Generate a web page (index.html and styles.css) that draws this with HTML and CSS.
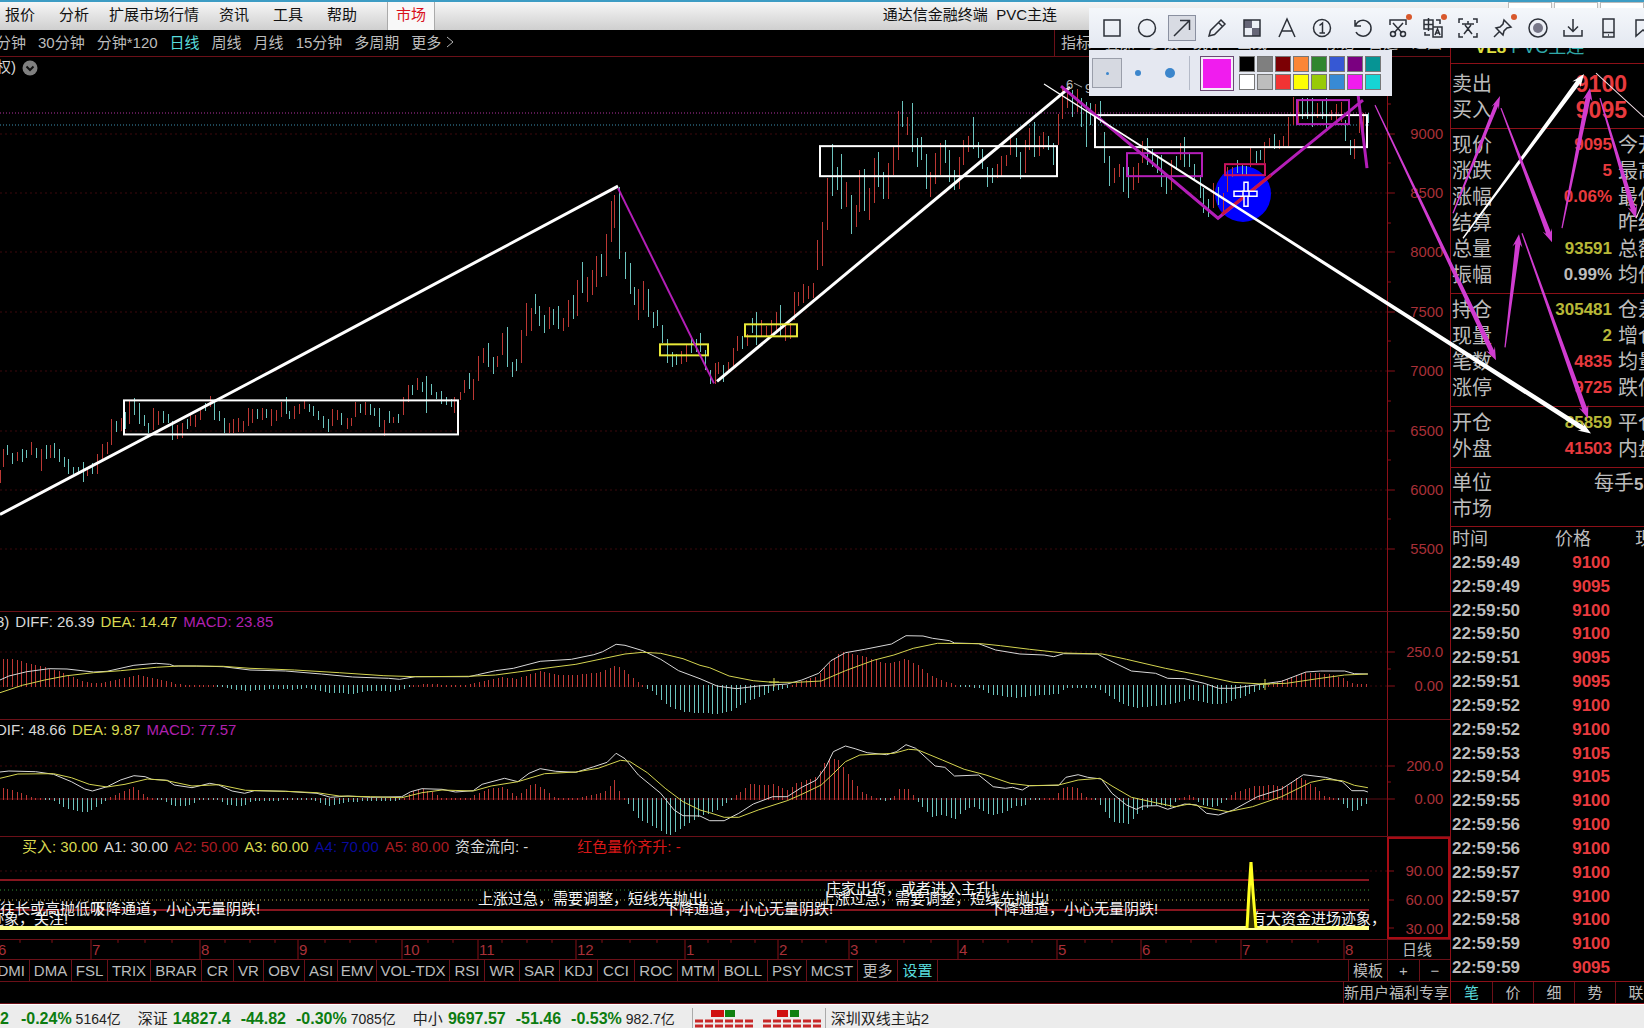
FILE: index.html
```html
<!DOCTYPE html>
<html lang="zh-CN">
<head>
<meta charset="utf-8">
<title>通达信金融终端 PVC主连</title>
<link rel="stylesheet" href="styles.css">
</head>
<body>
<div class="app">
  <header class="menubar">
    <nav class="menu">
      <a href="#">报价</a><a href="#">分析</a><a href="#">扩展市场行情</a><a href="#">资讯</a><a href="#">工具</a><a href="#">帮助</a>
      <a href="#" class="market">市场</a>
    </nav>
    <h1 class="app-title">通达信金融终端&nbsp; PVC主连</h1>
    <div class="win-buttons"><i></i><i></i><i></i></div>
  </header>

  <div class="work">
    <main class="charts">
      <nav class="periods">
        <a href="#">分钟</a><a href="#">30分钟</a><a href="#">分钟*120</a><a href="#" class="on">日线</a><a href="#">周线</a><a href="#">月线</a><a href="#">15分钟</a><a href="#">多周期</a><a href="#">更多 <svg width="8" height="12" viewBox="0 0 8 12"><path d="M1 1L7 6L1 11" fill="none" stroke="#b4b4b4"/></svg></a>
        <div class="tools"><a href="#">指标</a><a href="#">叠加</a><a href="#">多股</a><a href="#">统计</a><a href="#">画线</a><a href="#">标记</a><a href="#">自选</a><a href="#">返回</a></div>
      </nav>

      <section class="pane pane-price">
        <div class="legend"><span>权)</span>
          <svg class="chev" viewBox="0 0 16 16"><circle cx="8" cy="8" r="7.5" fill="#808080"/><path d="M4.500 6.500L8 10L11.500 6.500" fill="none" stroke="#111" stroke-width="2"/></svg>
        </div>
        <svg class="plot" viewBox="0 57 1387 554" preserveAspectRatio="none">
          <g class="grid"><path d="M0 134H1387M0 193H1387M0 252H1387M0 312H1387M0 371H1387M0 431H1387M0 490H1387M0 549H1387"/></g>
          <path d="M0 113H1370" class="dots magenta"/>
          <path d="M0 125H1370" class="dots blue"/>
          <circle cx="1243" cy="194" r="28" fill="#00f"/>
          <path id="candles-up" class="up"/><path id="candles-down" class="down"/>
        </svg>
        <svg class="scale" viewBox="1387 57 63 554" preserveAspectRatio="none">
          <path class="tick" d="M1387 134h7M1387 193h7M1387 252h7M1387 312h7M1387 371h7M1387 431h7M1387 490h7M1387 549h7M1387 104h3M1387 163h3M1387 223h3M1387 282h3M1387 341h3M1387 401h3M1387 460h3M1387 519h3"/>
          <text x="1443" y="139">9000</text><text x="1443" y="198">8500</text><text x="1443" y="257">8000</text><text x="1443" y="317">7500</text><text x="1443" y="376">7000</text><text x="1443" y="436">6500</text><text x="1443" y="495">6000</text><text x="1443" y="554">5500</text>
        </svg>
      </section>

      <section class="pane pane-macd">
        <div class="legend"><span>3)</span><span>DIFF: 26.39</span><span class="y">DEA: 14.47</span><span class="m">MACD: 23.85</span></div>
        <svg class="plot" viewBox="0 612 1387 107" preserveAspectRatio="none">
          <g class="grid"><path d="M0 652H1387M0 686H1387"/></g>
          <path id="h1-up" class="up"/><path id="h1-down" class="down"/>
          <path id="diff1" class="line white"/><path id="dea1" class="line yellow"/>
          <path d="M769 682H779M774 678V687M1260 684H1270M1265 679V690" class="line yellow"/>
        </svg>
        <svg class="scale" viewBox="1387 612 63 107" preserveAspectRatio="none">
          <path class="tick" d="M1387 652h7M1387 669h3M1387 686h7"/>
          <text x="1443" y="657">250.0</text><text x="1443" y="691">0.00</text>
        </svg>
      </section>

      <section class="pane pane-dif">
        <div class="legend"><span>DIF: 48.66</span><span class="y">DEA: 9.87</span><span class="m">MACD: 77.57</span></div>
        <svg class="plot" viewBox="0 720 1387 116" preserveAspectRatio="none">
          <g class="grid"><path d="M0 766H1387"/></g>
          <path d="M0 799H1387" stroke="#5a0c14"/>
          <path id="h2-up" class="up"/><path id="h2-down" class="down"/>
          <path id="diff2" class="line white"/><path id="dea2" class="line yellow"/>
        </svg>
        <svg class="scale" viewBox="1387 720 63 116" preserveAspectRatio="none">
          <path class="tick" d="M1387 766h7M1387 782h3M1387 799h7"/>
          <text x="1443" y="771">200.0</text><text x="1443" y="804">0.00</text>
        </svg>
      </section>

      <section class="pane pane-flow">
        <div class="legend"><span class="y">买入: 30.00</span><span>A1: 30.00</span><span class="r">A2: 50.00</span><span class="y">A3: 60.00</span><span class="b">A4: 70.00</span><span class="r">A5: 80.00</span><span>资金流向: -</span><span class="r bright">红色量价齐升: -</span></div>
        <svg class="plot" viewBox="0 837 1387 102" preserveAspectRatio="none">
          <g class="grid"><path d="M0 871H1387"/></g>
          <path d="M0 880H1369M0 910H1369" stroke="#86161f" stroke-width="2"/>
          <path d="M0 890H1369" class="dots green"/><path d="M0 900H1369" class="dots gold"/>
          <g class="notes">
            <text x="0" y="914">往长或高抛低吸</text><text x="91" y="914">下降通道，小心无量阴跌!</text>
            <text x="-11" y="924">迹象，关注!</text>
            <text x="478" y="904">上涨过急，需要调整，短线先抛出!</text><text x="664" y="914">下降通道，小心无量阴跌!</text>
            <text x="826" y="894">庄家出货，或者进入主升!</text><text x="820" y="904">上涨过急，需要调整，短线先抛出!</text><text x="989" y="914">下降通道，小心无量阴跌!</text>
            <text x="1251" y="924">有大资金进场迹象，</text>
          </g>
          <path d="M0 928H1369" stroke="#ffff8c" stroke-width="4"/>
          <path d="M1247 928L1249 892L1251 862L1253 892L1256 928" fill="#330" stroke="#ffff20" stroke-width="3"/>
        </svg>
        <svg class="scale selected" viewBox="1387 837 63 102" preserveAspectRatio="none">
          <path class="tick" d="M1387 871h7M1387 900h7M1387 928h7"/>
          <text x="1443" y="876">90.00</text><text x="1443" y="905">60.00</text><text x="1443" y="934">30.00</text>
        </svg>
      </section>

      <div class="time-axis">
        <svg class="plot" viewBox="0 939 1387 20" preserveAspectRatio="none">
          <path class="tick" d="M91 939v20M200 939v20M298 939v20M402 939v20M478 939v20M576 939v20M685 939v20M778 939v20M849 939v20M958 939v20M1057 939v20M1141 939v20M1241 939v20M1344 939v20M20 939v3M52 939v3M118 939v3M145 939v3M172 939v3M225 939v3M250 939v3M275 939v3M325 939v3M350 939v3M376 939v3M428 939v3M453 939v3M502 939v3M527 939v3M552 939v3M602 939v3M630 939v3M657 939v3M708 939v3M731 939v3M755 939v3M802 939v3M826 939v3M876 939v3M904 939v3M931 939v3M983 939v3M1008 939v3M1032 939v3M1085 939v3M1112 939v3M1166 939v3M1191 939v3M1216 939v3M1267 939v3M1292 939v3M1318 939v3"/>
          <text x="-2" y="955">6</text><text x="92" y="955">7</text><text x="201" y="955">8</text><text x="299" y="955">9</text><text x="403" y="955">10</text><text x="479" y="955">11</text><text x="577" y="955">12</text><text x="686" y="955">1</text><text x="779" y="955">2</text><text x="850" y="955">3</text><text x="959" y="955">4</text><text x="1058" y="955">5</text><text x="1142" y="955">6</text><text x="1242" y="955">7</text><text x="1345" y="955">8</text>
        </svg>
        <span>日线</span>
      </div>

      <nav class="indicators">
        <div class="ind-tabs"><a href="#">DMI</a><a href="#">DMA</a><a href="#">FSL</a><a href="#">TRIX</a><a href="#">BRAR</a><a href="#">CR</a><a href="#">VR</a><a href="#">OBV</a><a href="#">ASI</a><a href="#">EMV</a><a href="#">VOL-TDX</a><a href="#">RSI</a><a href="#">WR</a><a href="#">SAR</a><a href="#">KDJ</a><a href="#">CCI</a><a href="#">ROC</a><a href="#">MTM</a><a href="#">BOLL</a><a href="#">PSY</a><a href="#">MCST</a><a href="#">更多</a><a href="#" class="on">设置</a></div>
        <div class="ind-side"><a href="#">模板</a><button>+</button><button>−</button></div>
      </nav>
      <div class="promo"><a href="#">新用户福利专享</a></div>
    </main>

    <aside class="quote">
      <h2><b>VL8</b> PVC主连</h2>
      <table class="block first">
        <tr><th>卖出</th><td class="r big">9100</td></tr>
        <tr><th>买入</th><td class="r big">9095</td></tr>
      </table>
      <table class="block">
        <tr><th>现价</th><td class="r">9095</td><th>今开</th></tr>
        <tr><th>涨跌</th><td class="r">5</td><th>最高</th></tr>
        <tr><th>涨幅</th><td class="r">0.06%</td><th>最低</th></tr>
        <tr><th>结算</th><td></td><th>昨结</th></tr>
        <tr><th>总量</th><td class="y">93591</td><th>总额</th></tr>
        <tr><th>振幅</th><td>0.99%</td><th>均价</th></tr>
      </table>
      <table class="block">
        <tr><th>持仓</th><td class="y">305481</td><th>仓差</th></tr>
        <tr><th>现量</th><td class="y">2</td><th>增仓</th></tr>
        <tr><th>笔数</th><td class="r">4835</td><th>均量</th></tr>
        <tr><th>涨停</th><td class="r">9725</td><th>跌停</th></tr>
      </table>
      <table class="block">
        <tr><th>开仓</th><td class="y">85859</td><th>平仓</th></tr>
        <tr><th>外盘</th><td class="r">41503</td><th>内盘</th></tr>
      </table>
      <table class="block unit">
        <tr><th>单位</th><td><span>每手</span>5吨</td></tr>
        <tr><th>市场</th><td></td></tr>
      </table>
      <table class="ticks">
        <thead><tr><th>时间</th><th class="p">价格</th><th class="v">现量</th></tr></thead>
        <tbody>
          <tr><td>22:59:49</td><td class="r">9100</td></tr>
          <tr><td>22:59:49</td><td class="r">9095</td></tr>
          <tr><td>22:59:50</td><td class="r">9100</td></tr>
          <tr><td>22:59:50</td><td class="r">9100</td></tr>
          <tr><td>22:59:51</td><td class="r">9095</td></tr>
          <tr><td>22:59:51</td><td class="r">9095</td></tr>
          <tr><td>22:59:52</td><td class="r">9100</td></tr>
          <tr><td>22:59:52</td><td class="r">9100</td></tr>
          <tr><td>22:59:53</td><td class="r">9105</td></tr>
          <tr><td>22:59:54</td><td class="r">9105</td></tr>
          <tr><td>22:59:55</td><td class="r">9100</td></tr>
          <tr><td>22:59:56</td><td class="r">9100</td></tr>
          <tr><td>22:59:56</td><td class="r">9100</td></tr>
          <tr><td>22:59:57</td><td class="r">9100</td></tr>
          <tr><td>22:59:57</td><td class="r">9100</td></tr>
          <tr><td>22:59:58</td><td class="r">9100</td></tr>
          <tr><td>22:59:59</td><td class="r">9100</td></tr>
          <tr><td>22:59:59</td><td class="r">9095</td></tr>
        </tbody>
      </table>
      <nav class="quote-tabs"><a href="#" class="on">笔</a><a href="#">价</a><a href="#">细</a><a href="#">势</a><a href="#">联</a></nav>
    </aside>
  </div>

  <footer class="status">
    <div class="index"><b>2</b><b>-0.24%</b><span>5164亿</span></div>
    <div class="index"><strong>深证</strong><b>14827.4</b><b>-44.82</b><b>-0.30%</b><span>7085亿</span></div>
    <div class="index"><strong>中小</strong><b>9697.57</b><b>-51.46</b><b>-0.53%</b><span>982.7亿</span></div>
    <div class="lamps">
      <svg width="60" height="19" viewBox="0 0 60 19"><path d="M16 1h13v7h-13z" fill="#d01010"/><path d="M30 1h10v7h-10z" fill="#108010"/><path d="M0 12H60M0 17H60" stroke="#c82828" stroke-width="3" stroke-dasharray="8 2"/></svg>
      <svg width="60" height="19" viewBox="0 0 60 19"><path d="M14 1h11v7h-11z" fill="#d01010"/><path d="M27 1h9v7h-9z" fill="#108010"/><path d="M0 12H60M0 17H60" stroke="#c82828" stroke-width="3" stroke-dasharray="8 2"/></svg>
    </div>
    <div class="host">深圳双线主站2</div>
  </footer>

  <svg class="ink" viewBox="0 0 1644 1028" preserveAspectRatio="none">
    <g fill="none" stroke="#fff" stroke-width="2">
      <rect x="124" y="400" width="334" height="34"/>
      <rect x="820" y="146" width="237" height="30"/>
      <rect x="1095" y="115" width="272" height="32"/>
      <path d="M0 514L273 370L618 186" stroke-width="3"/>
      <path d="M717 381L1070 87" stroke-width="3"/>
    </g>
    <g fill="none" stroke="#e8e838" stroke-width="2">
      <rect x="660" y="344" width="48" height="11"/><rect x="745" y="324" width="52" height="12"/>
    </g>
    <g fill="none" stroke="#b41eb8" stroke-width="3">
      <path d="M618 188L714 383" stroke-width="2"/>
      <path d="M1061 86L1218 218L1363 100M1358 94L1363 135L1367 168"/>
      <rect x="1127" y="153" width="75" height="23" stroke-width="2"/>
      <rect x="1297" y="100" width="52" height="24" stroke-width="2"/>
      <rect x="1225" y="164" width="40" height="11" stroke="#c8125e" stroke-width="2"/>
      <path d="M1222 214L1271 175" stroke="#c81440"/>
    </g>
    <g class="peak"><text x="1066" y="89">6</text><text x="1085" y="93">9</text><path d="M1074 83L1082 87" stroke="#aaa"/></g>
    <g id="arrows"></g>
    <path d="M1596 73L1644 117M1636 218L1644 200" stroke="#f4dfe8" fill="none"/>
    <g fill="#00f" stroke="#fff" stroke-width="1.500">
      <path d="M1244 182h4v9h9v5h-9v10h-4v-10h-10v-5h10z"/><rect x="1243" y="191" width="6" height="5"/>
    </g>
  </svg>

  <div class="shot-bar" role="toolbar">
    <button><svg viewBox="0 0 22 22"><path d="M3 3H19V19H3Z"/></svg></button>
    <button><svg viewBox="0 0 22 22"><circle cx="11" cy="11" r="8.5"/></svg></button>
    <button class="active"><svg viewBox="0 0 22 22"><path d="M3 19L18 4M9 3.500H18.500V13"/></svg></button>
    <button><svg viewBox="0 0 22 22"><path d="M3 19L4.500 13.500L15 3L19 7L8.500 17.500ZM12.500 5.500L16.500 9.500"/></svg></button>
    <button><svg viewBox="0 0 22 22"><path d="M3 3H11V11H3ZM11 11H19V19H11Z" fill="#667" stroke="none"/><path d="M3 3H19V19H3Z"/></svg></button>
    <button><svg viewBox="0 0 22 22"><path d="M3 20L11 2L19 20M6 14H16"/></svg></button>
    <button><svg viewBox="0 0 22 22"><circle cx="11" cy="11" r="8.500"/><path d="M8.500 8.500L11.500 6V16M8.500 16H14"/></svg></button>
    <i class="rule"></i>
    <button><svg viewBox="0 0 22 22"><path d="M3 3V9H9M3.500 8.500A8 8 0 1 1 4 15"/></svg></button>
    <button class="dot"><svg viewBox="0 0 22 22"><path d="M3 8V3H19V8M6 6L15 16M16 6L7 16"/><circle cx="6" cy="17" r="2.500"/><circle cx="16" cy="17" r="2.500"/></svg></button>
    <button class="dot"><svg viewBox="0 0 22 22"><path d="M2 3H11V12H2ZM6.500 1V14M2 7.500H11M11 10H20V20H11ZM13 18L15.500 12L18 18M14 16H17M3 15V18H8M14 3H18V7"/></svg></button>
    <button><svg viewBox="0 0 22 22"><path d="M2 6V2H6M16 2H20V6M20 16V20H16M6 20H2V16M5 7H17M11 4V7M8 8L15 17M14 8L7 17"/></svg></button>
    <button class="dot"><svg viewBox="0 0 22 22"><path d="M12 3L19 10L15 11L12 14L11 18L4 11L8 10L11 7ZM7.500 14.500L2 20"/></svg></button>
    <button><svg viewBox="0 0 22 22"><circle cx="11" cy="11" r="9"/><circle cx="11" cy="11" r="5" fill="#778" stroke="none"/></svg></button>
    <button><svg viewBox="0 0 22 22"><path d="M11 2V14M6 9.500L11 14.500L16 9.500M2 13V19H20V13"/></svg></button>
    <button><svg viewBox="0 0 22 22"><path d="M6 2H17V20H6ZM6 15.500H17M11 18H12"/></svg></button>
    <button><svg viewBox="0 0 22 22"><path d="M4 3H18V19L11 13L4 19Z"/></svg></button>
  </div>

  <div class="color-bar" role="toolbar">
    <button class="size active"><i class="s1"></i></button>
    <button class="size"><i class="s2"></i></button>
    <button class="size"><i class="s3"></i></button>
    <i class="rule"></i>
    <button class="current"></button>
    <div class="palette">
      <button style="background:#000"></button><button style="background:#7f7f7f"></button><button style="background:#7c0004"></button><button style="background:#fb8636"></button><button style="background:#30862f"></button><button style="background:#3658d4"></button><button style="background:#7a0080"></button><button style="background:#069494"></button>
      <button style="background:#fff"></button><button style="background:#bdbdbd"></button><button style="background:#f23434"></button><button style="background:#fdfd04"></button><button style="background:#98ca08"></button><button style="background:#388ad4"></button><button style="background:#f01cee"></button><button style="background:#16d4d4"></button>
    </div>
  </div>
</div>
<script src="chart.js"></script>
</body>
</html>
```
FILE: styles.css
```css
* { box-sizing: border-box; }
body {
  margin: 0;
  background: #000;
  color: #bcbcbc;
  font: 15px/20px "Liberation Sans", "Noto Sans CJK SC", sans-serif;
}
a { color: inherit; text-decoration: none; }
button { padding: 0; border: 0; background: none; color: inherit; font: inherit; }
table { border-collapse: collapse; }
.y { color: #d8d850; }
.m { color: #b020b0; }
.b { color: #0a0a9c; }
.r { color: #a81c22; }
.r.bright { color: #d81818; margin-left: 43px; }
.on { color: #58dcdc; }

.app { position: relative; display: flex; flex-direction: column; min-height: 100vh; overflow: hidden; }

/* title and menu */
.menubar {
  display: flex;
  height: 30px;
  border-top: 2px solid #3d9cc4;
  background: linear-gradient(#f6f6f6, #cfcfcf);
  color: #111;
  line-height: 26px;
}
.menu { display: flex; flex: 1; padding-left: 5px; gap: 24px; white-space: nowrap; }
.menu a:nth-child(3) { margin-right: -4px; }
.menu a:nth-child(2) { margin-right: -4px; }
.menu .market { width: 48px; margin-left: 6px; border: 1px solid #aaa; border-width: 0 1px; background: #f8f8f8; color: #d8101c; text-align: center; }
.app-title { margin: 0; font-size: 15px; line-height: 26px; font-weight: 400; white-space: pre; }
.win-buttons { display: flex; justify-content: flex-end; gap: 2px; width: 587px; overflow: hidden; }
.win-buttons i { width: 44px; height: 20px; border: 1px solid #bbb; background: #fff; }

.work { display: flex; flex: 1; }
.charts { display: flex; flex-direction: column; flex: 1; min-width: 0; }

.periods {
  display: flex;
  gap: 12px;
  height: 27px;
  padding-right: 8px;
  border-bottom: 1px solid #6b1018;
  line-height: 26px;
  white-space: nowrap;
  overflow: hidden;
}
.periods > a:first-child { margin-left: -4px; }
.tools { display: flex; gap: 14px; margin-left: auto; padding-left: 6px; border-left: 1px solid #6b1018; }
.tools a:nth-child(5) { margin-right: 43px; }

/* chart panes */
.pane {
  position: relative;
  display: grid;
  grid-template-columns: minmax(0, 1fr) 63px;
  border-bottom: 1px solid #6b1018;
}
.pane-price { flex: 1; min-height: 300px; }
.pane-macd { height: 108px; }
.pane-dif { height: 117px; }
.pane-flow { height: 102px; border-bottom: 0; }
.pane svg { width: 100%; height: 100%; min-height: 0; }
.pane-price .plot, .pane-price .scale { height: 554px; }
.legend {
  position: absolute;
  top: 0;
  left: -4px;
  display: flex;
  gap: 6px;
  line-height: 20px;
  color: #d8d8d8;
  white-space: nowrap;
}
.pane-flow .legend { left: 22px; }
.legend .chev { width: 16px; height: 16px; margin-top: 3px; }
.plot { display: block; overflow: hidden; }
.scale { display: block; border-left: 1px solid #8c1018; }
.scale text, .time-axis text { fill: #a83038; font-size: 15px; }
.scale text { text-anchor: end; }
.scale.selected { border: 0; outline: 2px solid #a80c14; outline-offset: -2px; }
.tick { stroke: #8c1018; fill: none; }
.grid path { stroke: #3c080c; stroke-dasharray: 2 3; fill: none; }
.dots { stroke-dasharray: 1 2; fill: none; }
.dots.magenta { stroke: #b030a0; }
.dots.blue { stroke: #3c90b0; }
.dots.green { stroke: #309030; stroke-dasharray: 1 3; }
.dots.gold { stroke: #c0b050; stroke-dasharray: 1 3; }
.up { stroke: #bc3834; fill: none; }
.down { stroke: #6cc4be; fill: none; }
.line { fill: none; }
.line.white { stroke: #d8d8d8; }
.line.yellow { stroke: #d4d450; }
.notes text { fill: #f4f4f4; font-size: 15px; }

.time-axis { display: grid; grid-template-columns: minmax(0, 1fr) 63px; height: 20px; border-top: 1px solid #6b1018; }
.time-axis .plot { width: 100%; height: 19px; }
.time-axis span { border-left: 1px solid #6b1018; padding-right: 4px; text-align: center; }

.indicators { display: flex; justify-content: space-between; height: 23px; border: 1px solid #6b1018; border-width: 1px 0; line-height: 21px; }
.ind-tabs {
  display: grid;
  grid-template-columns: 30px 42px 36px 43px 51px 32px 30px 41px 33px 39px 73px 35px 35px 40px 38px 37px 43px 41px 49px 39px 51px 40px 40px;
}
.ind-tabs a { display: flex; justify-content: center; border-right: 1px solid #6b1018; }
.ind-tabs a:first-child { justify-content: flex-end; padding-right: 4px; }
.ind-side { display: grid; grid-template-columns: 39px 32px 31px; text-align: center; }
.ind-side > * { border-left: 1px solid #6b1018; }
.promo { display: flex; justify-content: flex-end; height: 22px; border-bottom: 1px solid #6b1018; line-height: 21px; }
.promo a { width: 107px; border-left: 1px solid #6b1018; white-space: nowrap; }

/* quote panel */
.quote { display: flex; flex-direction: column; width: 194px; border-left: 1px solid #8c1018; overflow: hidden; }
.quote h2 { height: 34px; margin: 0; padding-left: 24px; border-bottom: 1px solid #8c1018; color: #30a8a8; font-size: 18px; line-height: 34px; font-weight: 400; white-space: nowrap; }
.quote h2 b { color: #e0e040; font-size: 17px; }
.block { display: block; padding: 3px 0 5px 1px; border-bottom: 1px solid #8c1018; }
.block.first { padding-top: 7px; }
.block tr { display: flex; height: 26px; line-height: 26px; }
.block th { width: 40px; flex: none; padding: 0; text-align: left; font-weight: 400; font-size: 20px; white-space: nowrap; }
.block td { width: 120px; flex: none; padding: 0; text-align: right; font-size: 17px; font-weight: 700; }
.block td + th { margin-left: 6px; }
.block td.big { width: 135px; font-size: 23px; }
.block td.r, .ticks td.r { color: #e83a3e; }
.block td.y { color: #b8b838; }
.block.unit { padding: 2px 0 4px 1px; }
.unit td { padding-left: 102px; text-align: left; white-space: nowrap; }
.unit span { font-size: 20px; font-weight: 400; }
.ticks { display: flex; flex-direction: column; flex: 1; padding: 0 0 1px 1px; }
.ticks tbody { display: flex; flex-direction: column; flex: 1; }
.ticks tr { display: flex; flex: 1; align-items: center; }
.ticks th { padding: 0; font-size: 18px; line-height: 24px; font-weight: 400; white-space: nowrap; }
.ticks .p { margin-left: 67px; }
.ticks .v { margin-left: 44px; }
.ticks td { width: 79px; padding: 0; font-size: 17px; font-weight: 700; }
.ticks td.r { text-align: right; }
.quote-tabs { display: grid; grid-template-columns: repeat(5, 41px); height: 23px; border: 1px solid #8c1018; border-width: 1px 0; line-height: 21px; text-align: center; }
.quote-tabs a + a { border-left: 1px solid #6b1018; }

/* index strip */
.status { display: flex; height: 25px; padding-top: 3px; border-top: 1px solid #fff; background: #ececec; color: #222; line-height: 22px; white-space: nowrap; }
.index { display: flex; margin-right: 17px; }
.index b { margin-right: 10px; color: #0c7c10; font-size: 16px; }
.index b:last-of-type { margin-right: 4px; }
.index b:first-child { margin-right: 12px; }
.index strong { margin-right: 5px; font-weight: 400; }
.index span { font-size: 14px; }
.lamps { display: flex; gap: 8px; padding: 1px 2px; border: 1px solid #aaa; border-width: 0 1px; }
.host { padding-left: 5px; }

/* on-screen drawing layer */
.ink { position: absolute; inset: 0; width: 100%; height: 100%; pointer-events: none; }
.peak text { fill: #bbb; font-size: 13px; }

/* capture toolbars */
.shot-bar {
  position: absolute;
  top: 8px;
  right: 0;
  display: flex;
  align-items: center;
  gap: 7px;
  width: 555px;
  height: 40px;
  padding-left: 9px;
  overflow: hidden;
  background: linear-gradient(#f4f7fb, #e4e8f1);
}
.shot-bar button { position: relative; flex: none; width: 28px; height: 26px; }
.shot-bar svg { display: block; width: 22px; height: 22px; margin: 0 auto; fill: none; stroke: #2c3038; stroke-width: 1.5; }
.shot-bar .active { border: 1px solid #8a90a0; background: #d8dbe3; }
.shot-bar .dot::after { content: ""; position: absolute; top: -1px; right: 0; width: 6px; height: 6px; border-radius: 3px; background: #d8582c; }
.rule { width: 1px; background: #b4bac8; }
.shot-bar .rule { height: 16px; margin-right: -1px; }
.color-bar {
  position: absolute;
  top: 50px;
  right: 252px;
  display: flex;
  align-items: center;
  width: 303px;
  height: 46px;
  padding-left: 3px;
  background: #e5e8f1;
}
.size { display: flex; align-items: center; justify-content: center; width: 32px; height: 30px; }
.size.active { width: 30px; border: 1px solid #9a9eaa; background: #d6d9e1; }
.size i { border-radius: 50%; background: #3c86cc; }
.s1 { width: 3px; height: 3px; }
.s2 { width: 6px; height: 6px; }
.s3 { width: 10px; height: 10px; }
.color-bar .rule { height: 34px; margin-left: 3px; }
.current { width: 34px; height: 35px; margin: 0 5px 0 10px; border: 1px solid #6a4a74; background: #f01cee; box-shadow: inset 0 0 0 2px #f4eef8; }
.palette { display: grid; grid-template-columns: repeat(8, 16px); gap: 2px; }
.palette button { height: 16px; border: 1px solid #777; }
```
FILE: chart.js
```js
// Bars are stored as "<r|c>x high low" in sheet units; each sheet maps to the page with its own origin and scale.
const candleSheets = [
  { ox: 0, oy: 370, sx: 2.8, sy: 3, bars: "r1 300 340,r10 238 290,c20 226 256,c34 248 282,r48 245 272,c62 238 275,c73 240 263,r87 216 256,c101 234 265,r115 238 304,c129 226 266,r140 226 264,c153 219 263,c167 238 275,c181 262 290,c192 266 313,c206 290 312,c219 290 308,c234 275 335,r245 294 318,c258 280 312,r272 253 312,r286 222 268,r300 215 252,r311 148 226,c325 152 186,r339 143 182,c352 125 178,r362 92 162,c376 84 136,c391 98 161,c405 135 168,c416 158 188,r430 114 180,r443 122 166,c457 123 160,c471 133 160,c482 154 209,r496 166 206,r510 160 204,c524 147 178,r534 133 168,r548 136 172,r562 120 150,c576 100 124,r588 78 110,c600 90 150,c614 122 152,c628 143 190,r642 158 190,r654 148 188,r668 145 185,r682 152 185,r695 114 168,r706 118 160,c720 117 147,r734 114 150,c747 117 145,r759 118 168,r773 120 152,r787 96 140,c801 80 131,c811 122 148,r825 108 146,r839 102 132,r853 92 118,c867 102 125,c878 108 138,c891 122 150,c905 138 175,c919 148 185,r930 118 168,r944 120 150,c957 130 166,r972 143 176,r983 143 168,r996 95 142,c1010 103 130,r1024 96 136,c1038 103 134,c1049 114 138,c1063 114 172,r1077 150 198,c1091 122 158,r1103 140 158,c1116 133 158,r1130 80 136,r1143 45 96,c1154 45 76,r1168 25 60,c1182 35 66,c1195 17 128,c1209 42 76,c1221 66 88,c1235 62 102,c1249 80 106,c1264 88 112,r1273 80 130" },
  { ox: 450, oy: 170, sx: 3, sy: 3, bars: "r30 665 690,r44 630 668,c59 608 657,r70 628 690,r85 557 632,r100 535 578,c115 518 590,c130 560 612,r142 557 590,r156 488 556,c171 470 590,c186 575 620,c198 567 602,r213 480 578,r228 400 498,r243 415 482,c255 373 432,c269 408 468,c284 436 490,r299 412 478,c310 416 466,c325 408 478,r341 444 482,r355 390 472,c370 376 447,r381 330 438,c397 275 370,r412 322 395,r427 300 374,r438 258 350,c453 252 320,r468 192 318,r483 94 215,r494 75 173,c509 50 268,c525 245 327,c540 278 372,c554 350 406,r566 357 450,r581 334 420,c596 357 440,c611 425 473,c622 420 468,c637 465 520,c652 508 580,c667 545 590,c678 553 585,r693 542 582,r708 525 575,c723 505 550,c738 508 545,c750 488 545,c765 540 600,c780 600 642,r795 580 642,r806 577 612,c821 585 635,r836 577 610,r851 533 590,r863 498 542,c877 498 537,r893 492 528,c907 445 490,c919 426 525,r934 450 500,r948 468 500,r963 450 495,r978 425 480,c990 406 500,r1006 460 512,r1020 460 508,r1034 365 450,r1046 365 408,r1061 342 400,r1076 347 388,r1091 338 385,r1102 210 300,r1117 155 288" },
  { ox: 800, oy: 70, sx: 2.6133, sy: 3, bars: "r71 325 480,c84 222 378,c97 290 360,c108 252 418,r121 335 410,c134 375 492,r147 405 470,r156 300 425,c169 298 422,r182 355 450,r195 265 398,c205 245 350,c218 305 388,r231 278 388,r245 230 315,r257 122 270,c267 92 172,r281 140 195,c293 98 245,c307 203 290,c317 200 270,c330 252 358,r342 305 380,r355 248 342,r366 220 316,c379 210 280,c391 240 336,c404 300 360,r418 262 358,r428 210 285,r440 198 245,c453 140 238,c467 215 265,c477 238 298,c490 292 350,c502 295 340,r516 282 325,r526 258 320,r539 255 288,r551 193 255,c565 205 262,c575 245 328,r588 210 310,r601 175 240,c614 155 262,r627 198 258,r637 185 238,c649 198 240,c663 220 285,r676 132 225,r686 50 148,r698 65 115,c712 60 140,r725 58 125,c735 85 170,c748 95 230,c760 100 165,r773 102 140,c786 92 158,c796 186 278,c810 258 348,r823 294 338,r836 283 322,c846 290 365,c859 290 384,r871 290 360,r884 278 340,r894 212 280,c907 205 285,c921 238 290,c934 255 310,c946 255 352,c957 315 372,r970 270 360,c983 258 300,r995 220 270,c1006 200 292,c1018 250 290,c1032 282 328,c1046 316 385,c1054 355 430,c1068 388 440,r1081 340 415,c1094 350 405,r1106 370 430,r1117 290 365,r1130 290 322,c1143 270 310,c1156 285 315,c1167 288 318,r1178 230 290,c1192 242 280,c1203 240 270,r1215 215 280,r1228 204 235,c1241 193 238,r1254 210 238,r1264 198 228,r1277 140 228,r1290 80 165,r1303 90 160,c1314 85 148,c1327 85 148,c1340 85 170,r1352 98 145,c1365 92 148,c1377 85 175,r1390 120 150,r1402 102 160,r1414 95 155,c1425 150 212,c1438 210 256,r1450 208 268,r1461 80 190,r1473 130 235,c1486 130 158" }
];
const set = (id, d) => document.getElementById(id).setAttribute("d", d);
const px = v => Math.floor(v) + 0.5;

let up = "", down = "";
for (const s of candleSheets) {
  for (const bar of s.bars.split(",")) {
    const [x, hi, lo] = bar.slice(1).split(" ").map(Number);
    const d = `M${px(s.ox + x / s.sx)} ${Math.round(s.oy + hi / s.sy)}V${Math.round(s.oy + lo / s.sy)}`;
    if (bar[0] === "r") up += d; else down += d;
  }
}
set("candles-up", up);
set("candles-down", down);

// Curves are sampled in two halves: left sheet then right sheet.
const curve = (left, right) => {
  const read = (str, ox, sx) => str.split(" ").map(p => {
    const [x, y] = p.split(",").map(Number);
    return [ox + x / sx, 600 + y / 3];
  });
  return read(left, 0, 2.24).concat(read(right, 700, 2.0632).slice(1));
};
const line = (id, pts) => set(id, "M" + pts.map(p => p[0].toFixed(1) + " " + p[1].toFixed(1)).join("L"));
const histogram = (name, pts, zero) => {
  let a = "", b = "", i = 0;
  for (let x = 3; x < 1369; x += 4.67) {
    while (i < pts.length - 2 && pts[i + 1][0] < x) i++;
    const [x0, y0] = pts[i], [x1, y1] = pts[i + 1];
    const y = Math.round(y0 + (y1 - y0) * Math.min(1, (x - x0) / (x1 - x0)));
    if (y < zero) a += `M${px(x)} ${zero + 1}V${y}`;
    else b += `M${px(x)} ${zero - 1}V${y + 1}`;
  }
  set(name + "-up", a);
  set(name + "-down", b);
};

histogram("h1", curve("0,178 30,178 60,188 130,212 170,235 200,249 235,248 260,238 310,226 350,235 400,253 500,257 510,262 550,270 620,264 660,266 690,262 740,276 790,278 830,270 880,272 910,262 920,257 960,252 1040,257 1070,248 1125,232 1160,236 1210,213 1250,225 1290,226 1350,215 1382,195 1410,222 1435,252 1442,258 1460,270 1500,318 1540,334 1568,335",
  "0,335 35,340 65,330 100,300 150,272 185,260 200,248 240,230 270,185 292,155 330,165 380,188 400,188 425,175 450,195 480,230 515,248 530,258 575,260 600,280 650,290 690,285 740,278 755,260 820,260 850,290 880,315 900,320 960,312 1010,295 1050,308 1080,308 1120,288 1160,264 1180,252 1215,235 1245,217 1300,222 1330,235 1345,250 1380,252"), 686);
line("diff1", curve("0,240 20,228 60,215 110,206 150,207 210,216 240,214 300,196 350,190 380,193 390,198 440,198 500,200 560,210 640,213 720,222 790,231 870,235 895,238 930,230 1050,230 1070,224 1110,212 1150,205 1210,184 1280,178 1330,164 1350,155 1380,133 1400,136 1440,152 1480,178 1520,212 1568,236",
  "0,235 35,258 75,266 120,258 180,252 210,240 245,220 270,182 300,158 340,148 395,132 425,107 460,108 480,115 515,122 525,129 575,131 610,150 660,162 710,165 730,170 750,161 820,162 850,185 890,213 940,220 965,235 1000,236 1040,250 1070,265 1100,265 1160,252 1200,244 1250,216 1280,213 1330,213 1350,221 1378,222"));
line("dea1", curve("0,278 50,256 100,240 150,227 210,218 270,212 350,202 400,198 500,199 560,205 660,210 760,218 860,227 930,230 1050,229 1110,225 1160,216 1230,203 1290,193 1350,176 1400,162 1440,157 1480,160 1530,176 1568,196",
  "0,196 20,203 60,228 110,242 150,247 200,247 250,243 300,212 360,180 400,165 440,145 490,130 580,131 620,137 680,148 750,159 830,162 880,178 960,205 1030,225 1100,247 1160,252 1210,250 1270,237 1330,225 1378,222"));
histogram("h2", curve("0,560 20,568 75,592 100,596 120,600 150,622 190,636 215,620 235,600 245,592 270,578 300,560 325,586 340,595 370,597 378,612 400,617 430,612 445,598 490,597 510,612 545,616 565,600 700,597 720,608 740,614 790,602 900,598 910,590 930,570 950,568 975,580 990,595 1050,595 1070,582 1100,565 1130,562 1160,590 1180,565 1195,550 1225,572 1245,594 1290,594 1310,588 1355,575 1378,540 1390,582 1400,597 1410,612 1430,652 1470,680 1500,705 1540,670 1568,645",
  "0,640 30,632 60,602 75,586 105,550 130,555 155,552 180,570 200,550 240,530 262,480 285,476 310,530 335,575 355,588 378,600 400,594 410,568 430,565 445,592 455,612 480,648 500,640 525,656 550,622 570,618 600,642 630,635 650,615 670,615 680,597 730,594 750,562 775,560 795,590 820,597 835,630 850,662 885,668 910,630 930,615 950,612 970,618 985,597 1010,585 1025,597 1035,612 1060,620 1085,600 1100,580 1140,560 1180,555 1210,560 1235,530 1255,545 1280,575 1290,590 1320,597 1330,615 1350,634 1370,610 1380,606"), 799);
line("diff2", curve("0,516 20,513 80,515 120,523 160,545 190,567 207,573 240,560 270,540 300,527 325,530 340,538 375,541 390,555 430,563 470,550 490,555 520,573 548,580 570,572 640,574 710,580 740,592 780,588 830,592 900,590 920,575 945,566 990,568 1020,576 1060,572 1080,553 1130,535 1160,545 1185,520 1210,506 1245,514 1290,517 1330,500 1360,487 1380,460 1400,476 1430,525 1480,580 1510,630 1530,647 1568,648",
  "0,647 20,662 50,662 80,640 110,612 150,590 180,590 210,562 240,540 260,500 275,455 300,438 320,446 345,458 385,464 405,455 425,434 445,445 485,498 505,502 525,528 575,525 605,560 630,565 645,562 665,570 680,557 740,556 755,532 780,524 800,532 828,537 850,580 880,615 900,628 915,618 945,617 965,628 1000,612 1025,615 1045,640 1070,645 1100,630 1150,590 1200,567 1245,524 1290,532 1325,545 1345,572 1370,572 1378,576"));
line("dea2", curve("0,535 40,522 120,521 160,533 200,553 240,561 280,553 330,537 370,541 430,558 490,554 550,571 640,574 710,578 760,588 830,590 900,593 945,578 990,570 1060,573 1100,558 1160,545 1220,521 1290,516 1340,505 1390,481 1410,484 1450,518 1490,565 1530,605 1568,630",
  "0,628 20,638 50,652 80,652 120,630 180,602 210,583 250,555 270,528 300,485 330,465 400,460 430,448 450,450 500,480 545,508 590,525 640,550 680,557 740,555 780,540 825,535 850,558 890,592 940,608 980,620 1010,612 1050,625 1090,635 1140,620 1200,590 1260,547 1290,538 1325,542 1350,556 1378,563"));

// Tapered arrows: thin tail, wide shaft end, triangular head.
const arrows = [
  [1044, 84, 1591, 433, "#fff", 5], [1463, 238, 1584, 74, "#fff", 5],
  [1375, 105, 1496, 360, "#d03cd0", 5], [1453, 213, 1500, 96, "#d03cd0", 4],
  [1501, 108, 1552, 242, "#d03cd0", 5], [1562, 228, 1590, 88, "#d03cd0", 5],
  [1600, 98, 1636, 218, "#d03cd0", 5], [1505, 347, 1519, 234, "#d03cd0", 5],
  [1522, 233, 1588, 418, "#d03cd0", 5]
];
document.getElementById("arrows").innerHTML = arrows.map(([x0, y0, x1, y1, color, w]) => {
  const len = Math.hypot(x1 - x0, y1 - y0), ux = (x1 - x0) / len, uy = (y1 - y0) / len;
  const at = (back, side) => `${(x1 - ux * back - uy * side).toFixed(1)} ${(y1 - uy * back + ux * side).toFixed(1)}`;
  return `<path fill="${color}" d="M${at(len, 0.6)}L${at(10, w / 2)}L${at(13, w)}L${x1} ${y1}L${at(13, -w)}L${at(10, -w / 2)}L${at(len, -0.6)}Z"/>`;
}).join("");
```
